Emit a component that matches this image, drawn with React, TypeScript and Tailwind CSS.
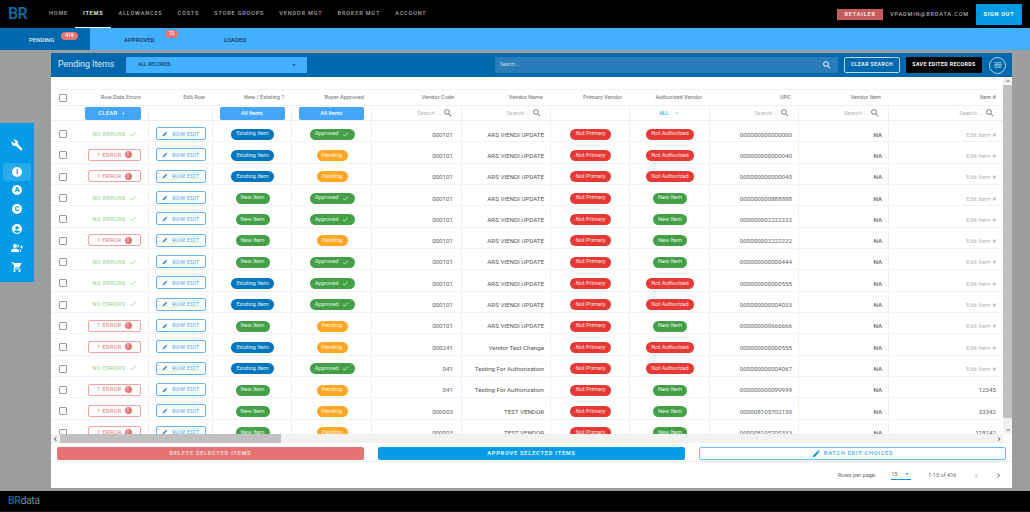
import React from "react";
import { MdBuild, MdAccountCircle, MdGroupAdd, MdShoppingCart, MdEdit, MdSearch, MdCheck, MdArrowDropDown, MdMenu, MdChevronLeft, MdChevronRight, MdKeyboardArrowDown, MdKeyboardArrowUp, MdArrowRight } from "react-icons/md";

const COLS = "grid grid-cols-[32px_66px_64px_79px_80px_90px_89px_79px_80px_89px_90px_114px]";
const nav = ["HOME", "ITEMS", "ALLOWANCES", "COSTS", "STORE GROUPS", "VENDOR MGT", "BROKER MGT", "ACCOUNT"];

type R = [boolean, boolean, boolean, string, string, boolean, string, string];
const rows: R[] = [
  [false, false, true, "000101", "ARS VIENDI UPDATE", false, "000000000000000", "Edit Item #"],
  [true, false, false, "000101", "ARS VIENDI UPDATE", false, "000000000000040", "Edit Item #"],
  [true, false, false, "000101", "ARS VIENDI UPDATE", false, "000000000000040", "Edit Item #"],
  [false, true, true, "000101", "ARS VIENDI UPDATE", true, "000000000888888", "Edit Item #"],
  [false, true, true, "000101", "ARS VIENDI UPDATE", true, "000000002222222", "Edit Item #"],
  [true, true, false, "000101", "ARS VIENDI UPDATE", true, "000000002222222", "Edit Item #"],
  [false, true, true, "000101", "ARS VIENDI UPDATE", true, "000000000000444", "Edit Item #"],
  [false, false, true, "000101", "ARS VIENDI UPDATE", false, "000000000000555", "Edit Item #"],
  [false, false, true, "000101", "ARS VIENDI UPDATE", false, "000000000004033", "Edit Item #"],
  [true, true, false, "000101", "ARS VIENDI UPDATE", true, "000000000666666", "Edit Item #"],
  [true, false, false, "000241", "Vendor Test Change", false, "000000000000555", "Edit Item #"],
  [false, false, true, "041", "Testing For Authorization", false, "000000000004067", "Edit Item #"],
  [true, true, false, "041", "Testing For Authorization", true, "000000000099999", "12345"],
  [true, true, false, "000003", "TEST VENDOR", true, "000008105702159", "33342"],
  [true, true, false, "000003", "TEST VENDOR", true, "000008105705333", "118142"],
];

function Pill({ color, children }: { color: string; children: React.ReactNode }) {
  return <span className={`inline-flex h-[11px] items-center justify-center gap-1 rounded-full px-[5px] text-[5.6px] leading-none text-white/85 ${color}`}>{children}</span>;
}

function Box() {
  return <span className="block size-[8px] rounded-[1px] border border-[#9a9a9a] bg-white" />;
}

function SearchCell({ border = true }: { border?: boolean }) {
  return (
    <div className={`flex items-center justify-end gap-[2px] pr-[8px] text-[5.8px] text-[#b5b5b5] ${border ? "border-r border-[#eef0f5]" : ""}`}>
      <span>Search ...</span>
      <MdSearch className="size-[10px] text-[#777]" />
    </div>
  );
}

function CircleLetter({ l }: { l: string }) {
  return <span className="flex size-[10px] items-center justify-center rounded-full bg-white text-[7.5px] font-bold leading-none text-[#039be5]">{l}</span>;
}

export default function App() {
  return (
    <div className="flex h-[512px] w-[1030px] flex-col overflow-hidden bg-[#9e9e9e] font-['Roboto',sans-serif]">
      <header className="flex h-[28px] shrink-0 items-center bg-black">
        <div className="ml-[8px] w-[41px] text-[16px] font-medium leading-none tracking-[-0.6px] text-[#0a6ea8]">BR</div>
        <nav className="flex h-full gap-[15px]">
          {nav.map((n) => (
            <div key={n} className={`flex items-center border-b text-[5.6px] font-medium tracking-[0.8px] ${n === "ITEMS" ? "-mx-[8px] border-white px-[8px] font-bold text-white" : "border-transparent text-[#a4a4a4]"}`}>{n}</div>
          ))}
        </nav>
        <div className="ml-auto flex items-center">
          <span className="flex h-[11px] w-[46px] items-center justify-center bg-[#c75b5b] text-[5.6px] font-medium tracking-[0.8px] text-white">RETAILER</span>
          <span className="ml-[7px] text-[5.6px] font-medium tracking-[0.8px] text-[#a8a8a8]">VPADMIN@BRDATA.COM</span>
          <span className="ml-[7px] mr-[8px] flex h-[21px] w-[46px] items-center justify-center rounded-[1px] bg-[#039be5] text-[5.6px] font-bold tracking-[0.7px] text-white">SIGN OUT</span>
        </div>
      </header>

      <div className="flex h-[22px] shrink-0 items-center bg-[#42b0ff] pt-[1px] text-[6px] font-medium text-[#17324a]">
        <div className="relative -mt-[1px] flex h-[22px] w-[90px] items-center bg-[#0068ad] pl-[29px] pt-[1px] text-white/85">
          PENDING
          <span className="absolute left-[61px] top-[4px] flex h-[8px] w-[17px] items-center justify-center rounded-full bg-[#e57373] text-[5px] text-white">416</span>
        </div>
        <div className="relative w-[100px] pl-[34px]">
          APPROVED
          <span className="absolute left-[75px] top-[-5px] flex h-[8px] w-[13px] items-center justify-center rounded-full bg-[#e57373] text-[5px] text-white">72</span>
        </div>
        <div className="pl-[34px]">LOADED</div>
      </div>

      <main className="flex min-h-0 flex-1 pt-[3px]">
        <div className="w-[51px] shrink-0">
          <aside className="mt-[70px] flex h-[159px] w-[34px] flex-col items-center bg-[#039be5] pt-[16px] text-white">
            <MdBuild className="size-[12px] shrink-0" />
            <span className="mt-[12px] flex h-[18px] w-[28px] shrink-0 items-center justify-center rounded-[2px] bg-white/15"><CircleLetter l="I" /></span>
            <span className="mt-[4px]"><CircleLetter l="A" /></span>
            <span className="mt-[9px]"><CircleLetter l="C" /></span>
            <MdAccountCircle className="mt-[9px] size-[12px] shrink-0" />
            <MdGroupAdd className="mt-[7px] size-[12px] shrink-0" />
            <MdShoppingCart className="mt-[7px] size-[12px] shrink-0" />
          </aside>
        </div>

        <section className="flex h-[435px] w-[961px] flex-col bg-white">
          <div className="flex h-[24px] shrink-0 items-center bg-[#0068ad] pl-[7px] pr-[6px]">
            <span className="w-[68px] text-[8.8px] text-white/85">Pending Items</span>
            <div className="flex h-[16px] w-[181px] items-center justify-between rounded-[1px] bg-[#42b0ff] pl-[12px] pr-[9px] text-[5.1px] font-medium text-[#123c5c]">
              ALL RECORDS
              <MdArrowDropDown className="size-[8px] text-[#123c5c]" />
            </div>
            <div className="ml-[188px] flex h-[16px] w-[343px] items-center justify-between rounded-[1px] bg-[#2a7cb8] pl-[5px] pr-[6px] text-[5px] text-white/75">
              Search ...
              <MdSearch className="size-[10px] text-white" />
            </div>
            <span className="ml-[6px] flex h-[16px] w-[56px] items-center justify-center rounded-[2px] border border-[#b5d8ee] text-[5.2px] font-bold tracking-[0.4px] text-white/90">CLEAR SEARCH</span>
            <span className="ml-[6px] flex h-[16px] w-[76px] items-center justify-center rounded-[1px] bg-black text-[5.2px] font-bold tracking-[0.4px] text-white">SAVE EDITED RECORDS</span>
            <span className="ml-[7px] flex size-[17px] items-center justify-center rounded-full border border-[#b5d8ee]"><MdMenu className="size-[10px] text-[#cfe6f5]" /></span>
          </div>

          <div className="flex h-[366px] shrink-0">
            <div className="flex w-[952px] flex-col">
              <div className="h-[357px] overflow-hidden">
                <div className="h-[13px] border-b border-[#eef0f5]" />
                <div className={`${COLS} h-[15px] items-center text-right text-[5.6px] font-medium text-[#888]`}>
                  <div className="pl-[8px]"><Box /></div>
                  <div className="pr-[8px]">Row Data Errors</div>
                  <div className="pr-[8px]">Edit Row</div>
                  <div className="pr-[8px]">New / Existing ?</div>
                  <div className="pr-[8px]">Buyer Approved</div>
                  <div className="pr-[8px]">Vendor Code</div>
                  <div className="pr-[8px]">Vendor Name</div>
                  <div className="pr-[8px]">Primary Vendor</div>
                  <div className="pr-[8px]">Authorized Vendor</div>
                  <div className="pr-[8px]">UPC</div>
                  <div className="pr-[8px]">Vendor Item</div>
                  <div className="pr-[7px]">Item #</div>
                </div>
                <div className={`${COLS} h-[16px] border-y border-[#eef0f5]`}>
                  <div />
                  <div className="flex items-center justify-end border-r border-[#eef0f5] pr-[7px]">
                    <span className="flex h-[13px] w-[56px] items-center justify-center gap-[3px] rounded-[2px] bg-[#42a5f5] text-[5.5px] font-medium tracking-[0.4px] text-white">CLEAR<MdArrowRight className="size-[7px]" /></span>
                  </div>
                  <div className="border-r border-[#eef0f5]" />
                  <div className="flex items-center justify-center border-r border-[#eef0f5]"><span className="flex h-[13px] w-[65px] items-center justify-center rounded-[2px] bg-[#42a5f5] text-[5.5px] font-medium text-white">All Items</span></div>
                  <div className="flex items-center justify-center border-r border-[#eef0f5]"><span className="flex h-[13px] w-[65px] items-center justify-center rounded-[2px] bg-[#42a5f5] text-[5.5px] font-medium text-white">All Items</span></div>
                  <SearchCell />
                  <SearchCell />
                  <div className="border-r border-[#eef0f5]" />
                  <div className="flex items-center justify-center gap-[5px] border-r border-[#eef0f5] text-[5.5px] font-medium text-[#42a5f5]">ALL<MdKeyboardArrowDown className="size-[6px]" /></div>
                  <SearchCell />
                  <SearchCell />
                  <SearchCell border={false} />
                </div>
                {rows.map((r, i) => (
                  <div key={i} className={`${COLS} h-[21.33px] items-stretch border-b border-[#f1f3f8] text-[6.2px] text-[#555]`}>
                    <div className="flex items-center pl-[8px] pt-[6px]"><Box /></div>
                    <div className="flex items-center justify-end border-r border-[#eef0f5] pr-[7px] pt-[5px]">
                      {r[0] ? (
                        <span className="flex h-[12px] w-[53px] items-center justify-center gap-[3px] rounded-[2px] border border-[#f0a5a5] text-[5.5px] tracking-[0.4px] text-[#e57373]">
                          1 ERROR
                          <span className="flex size-[7px] items-center justify-center rounded-full bg-[#e57373] text-[5px] font-bold text-white">!</span>
                        </span>
                      ) : (
                        <span className="flex w-[53px] items-center justify-center gap-[3px] text-[5.5px] tracking-[0.4px] text-[#8fd08f]">NO ERRORS<MdCheck className="size-[8px]" /></span>
                      )}
                    </div>
                    <div className="flex items-center justify-center border-r border-[#eef0f5] pl-[1px] pt-[5px]">
                      <span className="flex h-[13px] w-[50px] items-center justify-center gap-[4px] rounded-[2px] border border-[#64b5f6] text-[5.5px] tracking-[0.3px] text-[#42a5f5]"><MdEdit className="size-[6px] text-[#1976d2]" />ROW EDIT</span>
                    </div>
                    <div className="flex items-center justify-center border-r border-[#eef0f5] pl-[1px] pt-[6px]">
                      {r[1] ? <Pill color="w-[34px] bg-[#43a047]">New Item</Pill> : <Pill color="w-[43px] bg-[#0277bd]">Existing Item</Pill>}
                    </div>
                    <div className="flex items-center justify-center border-r border-[#eef0f5] pl-[1px] pt-[6px]">
                      {r[2] ? <Pill color="w-[45px] bg-[#43a047]">Approved<MdCheck className="size-[7px]" /></Pill> : <Pill color="w-[31px] bg-[#ffa726]">Pending</Pill>}
                    </div>
                    <div className="flex items-center justify-end border-r border-[#eef0f5] pr-[8px] pt-[8px] text-[#666]">{r[3]}</div>
                    <div className="flex items-center justify-end whitespace-nowrap border-r border-[#eef0f5] pr-[6px] pt-[8px] text-[#555]">{r[4]}</div>
                    <div className="flex items-center justify-center border-r border-[#eef0f5] pl-[1px] pt-[6px]"><Pill color="w-[41px] bg-[#e53935]">Not Primary</Pill></div>
                    <div className="flex items-center justify-center border-r border-[#eef0f5] pl-[1px] pt-[6px]">
                      {r[5] ? <Pill color="w-[34px] bg-[#43a047]">New Item</Pill> : <Pill color="w-[48px] bg-[#e53935]">Not Authorized</Pill>}
                    </div>
                    <div className="flex items-center justify-end border-r border-[#eef0f5] pr-[6px] pt-[8px] text-[#666]">{r[6]}</div>
                    <div className="flex items-center justify-end border-r border-[#eef0f5] pr-[6px] pt-[8px] font-medium text-[#666]">NA</div>
                    <div className={`flex items-center justify-end pr-[7px] pt-[8px] ${r[7].startsWith("Edit") ? "text-[#b5b5b5]" : "text-[#666]"}`}>{r[7]}</div>
                  </div>
                ))}
              </div>
              <div className="flex h-[9px] items-center bg-[#f1f1f1]">
                <MdChevronLeft className="w-[9px] shrink-0 text-[#555]" />
                <div className="h-full w-[221px] bg-[#c1c1c1]" />
                <MdChevronRight className="ml-auto size-[8px] text-[#555]" />
              </div>
            </div>
            <div className="flex h-[357px] w-[9px] flex-col items-center bg-[#f1f1f1]">
              <MdKeyboardArrowUp className="size-[8px] shrink-0 text-[#555]" />
              <div className="h-[333px] w-full bg-[#c1c1c1]" />
              <MdKeyboardArrowDown className="mt-auto size-[8px] text-[#555]" />
            </div>
          </div>

          <div className="flex h-[19px] shrink-0 items-start border-b border-[#eeeeee] pl-[6px] pr-[6px] pt-[4px]">
            <span className="flex h-[13px] w-[307px] items-center justify-center rounded-[2px] bg-[#e57373] text-[5.6px] font-medium tracking-[0.8px] text-white/80">DELETE SELECTED ITEMS</span>
            <span className="ml-[14px] flex h-[13px] w-[307px] items-center justify-center rounded-[2px] bg-[#039be5] text-[5.6px] font-bold tracking-[0.8px] text-white/90">APPROVE SELECTED ITEMS</span>
            <span className="ml-[14px] flex h-[13px] w-[307px] items-center justify-center gap-[3px] rounded-[2px] border border-[#64c0f5] text-[5.6px] font-bold tracking-[0.75px] text-[#5ab8f0]"><MdEdit className="size-[9px] text-[#039be5]" />BATCH EDIT CHOICES</span>
          </div>

          <div className="flex min-h-0 flex-1 items-center text-[5.6px] text-[#666]">
            <span className="ml-[787px]">Rows per page:</span>
            <span className="ml-[15px] flex h-[10px] w-[20px] items-center justify-between border-b border-[#039be5] pb-[1px]">15<MdArrowDropDown className="size-[8px] text-[#039be5]" /></span>
            <span className="ml-[17px]">1-15 of 416</span>
            <MdChevronLeft className="ml-[16px] size-[9px] text-[#bbb]" />
            <MdChevronRight className="ml-[13px] size-[9px] text-[#666]" />
          </div>
        </section>
      </main>

      <footer className="flex h-[21px] shrink-0 items-start border-b border-[#0e1a26] bg-black pl-[8px] pt-[5px] text-[10.5px] leading-none tracking-[-0.4px]">
        <span className="font-medium text-[#0a6ea8]">BR</span><span className="text-[#7d8a92]">data</span>
      </footer>
    </div>
  );
}
